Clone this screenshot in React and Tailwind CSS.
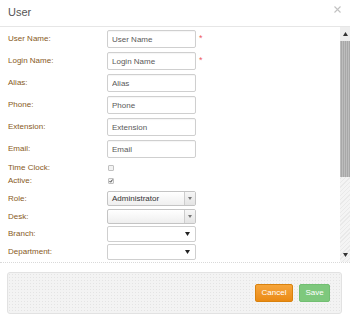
import React from 'react';

const labelCls = "w-[99px] shrink-0 text-[8px] text-[#875a24]";

function TextRow({ label, placeholder, required, className }) {
  return (
    <div className={`flex items-center h-[18px] ${className || ''}`}>
      <span className={labelCls}>{label}</span>
      <input
        readOnly
        placeholder={placeholder}
        className="w-[89px] h-[18px] border border-[#cfcfcf] rounded-[2px] px-[4px] text-[8px] text-[#5a5a5a] placeholder:text-[#5a5a5a] shadow-[inset_0_1px_1px_rgba(0,0,0,0.04)] outline-none"
      />
      {required && <span className="ml-[3px] -mt-[1px] text-[9px] leading-none text-[#ee5a5f]">*</span>}
    </div>
  );
}

function CheckRow({ label, checked, className }) {
  return (
    <div className={`flex items-center h-[12px] ${className || ''}`}>
      <span className={labelCls}>{label}</span>
      <span className="ml-[1px] w-[6px] h-[6px] border border-[#c0c0c0] rounded-[1px] bg-[#f3f3f3] flex items-center justify-center">
        {checked && (
          <svg width="6" height="6" viewBox="0 0 6 6">
            <path d="M0.8 3.2 L2.4 4.8 L5.4 0.8" stroke="#222" strokeWidth="1.3" fill="none" />
          </svg>
        )}
      </span>
    </div>
  );
}

function ComboRow({ label, value, className }) {
  return (
    <div className={`flex items-center h-[15px] ${className || ''}`}>
      <span className={labelCls}>{label}</span>
      <div className="w-[89px] h-[15px] border border-[#c4c4c4] rounded-[2px] flex bg-gradient-to-b from-white to-[#efefef]">
        <span className="flex-1 pl-[4px] text-[8px] leading-[13px] text-[#333]">{value}</span>
        <span className="w-[11px] border-l border-[#cdcdcd] bg-gradient-to-b from-[#f6f6f6] to-[#e4e4e4] flex items-center justify-center">
          <svg width="4" height="3" viewBox="0 0 4 3"><path d="M0 0 H4 L2 3 Z" fill="#777" /></svg>
        </span>
      </div>
    </div>
  );
}

function SelectRow({ label, className }) {
  return (
    <div className={`flex items-center h-[16px] ${className || ''}`}>
      <span className={labelCls}>{label}</span>
      <div className="w-[89px] h-[16px] border border-[#cfcfcf] rounded-[2px] bg-white flex items-center justify-end pr-[5px]">
        <svg width="5" height="4" viewBox="0 0 5 4"><path d="M0 0 H5 L2.5 4 Z" fill="#222" /></svg>
      </div>
    </div>
  );
}

function ScrollBar() {
  return (
    <div className="w-[10px] flex flex-col bg-[#f1f1f1] bg-[repeating-linear-gradient(135deg,#f4f4f4_0px,#f4f4f4_2px,#e9e9e9_2px,#e9e9e9_3px)]">
      <div className="h-[14px] flex items-center justify-center bg-[#eeeeee]">
        <svg width="5" height="4" viewBox="0 0 5 4"><path d="M0 4 H5 L2.5 0 Z" fill="#333" /></svg>
      </div>
      <div className="h-[136px] bg-[#b3b3b3] bg-[repeating-linear-gradient(90deg,#bdbdbd_0px,#bdbdbd_1px,#a8a8a8_1px,#a8a8a8_2px)]" />
      <div className="flex-1" />
      <div className="h-[14px] flex items-center justify-center">
        <svg width="5" height="4" viewBox="0 0 5 4"><path d="M0 0 H5 L2.5 4 Z" fill="#333" /></svg>
      </div>
    </div>
  );
}

export default function App() {
  return (
    <div className="w-[350px] h-[317px] bg-white flex flex-col font-['Liberation_Sans',Arial,sans-serif]">
      <div className="h-[27px] shrink-0 border-b border-[#e6e6e6] flex items-center justify-between pl-[8px] pr-[9px]">
        <span className="text-[11px] text-[#555] -mt-[2px]">User</span>
        <svg width="7" height="7" viewBox="0 0 7 7" className="-mt-[8px]">
          <path d="M0.5 0.5 L6.5 6.5 M6.5 0.5 L0.5 6.5" stroke="#c2c2c2" strokeWidth="1.1" />
        </svg>
      </div>

      <div className="h-[236px] shrink-0 flex border-b border-dotted border-[#d9d9d9]">
        <div className="flex-1 overflow-hidden pt-[3px] pl-[8px]">
          <TextRow label="User Name:" placeholder="User Name" required />
          <TextRow label="Login Name:" placeholder="Login Name" required className="mt-[4px]" />
          <TextRow label="Alias:" placeholder="Alias" className="mt-[4px]" />
          <TextRow label="Phone:" placeholder="Phone" className="mt-[4px]" />
          <TextRow label="Extension:" placeholder="Extension" className="mt-[4px]" />
          <TextRow label="Email:" placeholder="Email" className="mt-[4px]" />
          <CheckRow label="Time Clock:" className="mt-[4px]" />
          <CheckRow label="Active:" checked className="mt-[1px]" />
          <ComboRow label="Role:" value="Administrator" className="mt-[4px]" />
          <ComboRow label="Desk:" className="mt-[3px]" />
          <SelectRow label="Branch:" className="mt-[2px]" />
          <SelectRow label="Department:" className="mt-[2px]" />
        </div>
        <ScrollBar />
      </div>

      <div className="pt-[9px] pl-[7px] pr-[8px]">
        <div className="h-[42px] border border-[#e2e2e2] rounded-[3px] bg-[#f3f3f3] bg-[radial-gradient(#e4e4e4_0.6px,transparent_0.6px)] bg-[size:3px_3px] flex items-center justify-end gap-[6px] pr-[11px]">
          <button className="w-[38px] h-[18px] rounded-[2px] border border-[#d9820e] bg-gradient-to-b from-[#f6a53a] to-[#ea8a12] text-white text-[8px]">Cancel</button>
          <button className="w-[31px] h-[18px] rounded-[2px] border border-[#72bf72] bg-[#7ec87d] text-white text-[8px]">Save</button>
        </div>
      </div>
    </div>
  );
}
